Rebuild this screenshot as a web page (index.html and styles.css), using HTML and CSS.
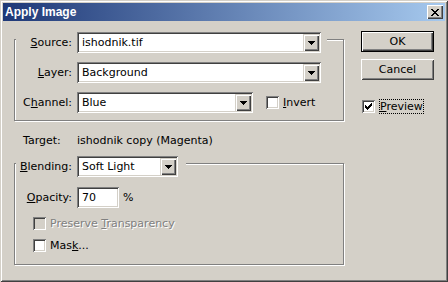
FILE: index.html
```html
<!DOCTYPE html>
<html lang="en">
<head>
  <meta charset="UTF-8" />
  <title>Apply Image</title>
  <link rel="stylesheet" href="styles.css">
</head>
<body>
  <div class="window">
    <!-- caption -->
    <div class="titlebar">
      <span class="title">Apply Image</span>
      <span class="close">
        <svg width="8" height="7" viewBox="0 0 8 7" shape-rendering="crispEdges">
          <path d="M0 0h2v1h-2z M6 0h2v1h-2z M1 1h2v1h-2z M5 1h2v1h-2z M2 2h4v1h-4z M3 3h2v1h-2z M2 4h4v1h-4z M1 5h2v1h-2z M5 5h2v1h-2z M0 6h2v1h-2z M6 6h2v1h-2z" fill="#000"/>
        </svg>
      </span>
    </div>

    <div class="content">
      <div class="main">
        <!-- source group -->
        <div class="group group-source">
          <div class="row head">
            <span class="lbl"><u>S</u>ource:</span>
            <div class="combo combo-wide">
              <span class="combo-text">ishodnik.tif</span>
              <span class="combo-btn"><svg width="7" height="4" shape-rendering="crispEdges"><path d="M0 0h7v1h-7z M1 1h5v1h-5z M2 2h3v1h-3z M3 3h1v1h-1z"/></svg></span>
            </div>
          </div>
          <div class="row">
            <span class="lbl"><u>L</u>ayer:</span>
            <div class="combo combo-wide">
              <span class="combo-text">Background</span>
              <span class="combo-btn"><svg width="7" height="4" shape-rendering="crispEdges"><path d="M0 0h7v1h-7z M1 1h5v1h-5z M2 2h3v1h-3z M3 3h1v1h-1z"/></svg></span>
            </div>
          </div>
          <div class="row">
            <span class="lbl">C<u>h</u>annel:</span>
            <div class="combo combo-channel">
              <span class="combo-text">Blue</span>
              <span class="combo-btn"><svg width="7" height="4" shape-rendering="crispEdges"><path d="M0 0h7v1h-7z M1 1h5v1h-5z M2 2h3v1h-3z M3 3h1v1h-1z"/></svg></span>
            </div>
            <span class="check invert">
              <span class="box"></span>
              <span><u>I</u>nvert</span>
            </span>
          </div>
        </div>

        <div class="target">
          <span class="target-lbl">Target:</span>
          <span>ishodnik copy (Magenta)</span>
        </div>

        <!-- blending group -->
        <div class="group group-blend">
          <div class="row head head-blend">
            <span class="lbl"><u>B</u>lending:</span>
            <div class="combo combo-blend">
              <span class="combo-text">Soft Light</span>
              <span class="combo-btn"><svg width="7" height="4" shape-rendering="crispEdges"><path d="M0 0h7v1h-7z M1 1h5v1h-5z M2 2h3v1h-3z M3 3h1v1h-1z"/></svg></span>
            </div>
          </div>
          <div class="row">
            <span class="lbl"><u>O</u>pacity:</span>
            <div class="field">70</div>
            <span class="pct">%</span>
          </div>
          <div class="check check-row disabled">
            <span class="box"></span>
            <span>Preserve <u>T</u>ransparency</span>
          </div>
          <div class="check check-row">
            <span class="box"></span>
            <span>Mas<u>k</u>...</span>
          </div>
        </div>
      </div>

      <div class="side">
        <div class="btn btn-default"><span class="btn-face">OK</span></div>
        <div class="btn"><span class="btn-face">Cancel</span></div>
        <div class="check preview">
          <span class="box">
            <svg width="7" height="7" shape-rendering="crispEdges"><path d="M0 2h1v3h-1z M1 3h1v3h-1z M2 4h1v3h-1z M3 3h1v3h-1z M4 2h1v3h-1z M5 1h1v3h-1z M6 0h1v3h-1z"/></svg>
          </span>
          <span class="focus"><u>P</u>review</span>
        </div>
      </div>
    </div>
  </div>
</body>
</html>
```

FILE: styles.css
```css
* {
  box-sizing: border-box;
}

html, body {
  margin: 0;
  background: #d4d0c8;
  font-family: "DejaVu Sans", Verdana, sans-serif;
  font-size: 11px;
  line-height: 13px;
  color: #000;
}

u {
  text-underline-offset: 1px;
}

.window {
  width: 448px;
  height: 282px;
  padding: 3px;
  background: #d4d0c8;
  box-shadow: inset 1px 1px #d4d0c8, inset -1px -1px #404040,
              inset 2px 2px #fff, inset -2px -2px #808080;
}

/* caption */
.titlebar {
  height: 18px;
  display: flex;
  align-items: center;
  justify-content: space-between;
  padding: 0 2px 0 2px;
  background: linear-gradient(to right, #1e3877, #a6c9ee);
}

.title {
  font-family: "Liberation Sans", Arial, sans-serif;
  font-weight: bold;
  font-size: 12px;
  color: #fff;
}

.close {
  width: 16px;
  height: 14px;
  display: flex;
  align-items: center;
  justify-content: center;
  background: #d4d0c8;
  box-shadow: inset 1px 1px #fff, inset -1px -1px #404040, inset -2px -2px #808080;
}

/* body */
.content {
  display: flex;
  padding-left: 11px;
}

.main {
  width: 330px;
}

.group {
  border: 1px solid #808080;
  box-shadow: inset 1px 1px #fff, 1px 1px #fff;
}

.group-source {
  margin-top: 18px;
  padding-bottom: 7px;
}

.group-blend {
  margin-top: 16px;
  padding-bottom: 12px;
}

.row {
  display: flex;
  align-items: center;
  height: 21px;
  margin: 9px 0 0 1px;
}

.row.head {
  margin-top: -8px;
  width: fit-content;
  padding-right: 6px;
  background: #d4d0c8;
}

.row.head-blend {
  padding-right: 8px;
}

.group-blend .row + .row {
  margin-top: 10px;
}

.lbl {
  width: 56px;
  margin-right: 5px;
  text-align: right;
}

/* combo boxes */
.combo {
  display: flex;
  height: 21px;
  padding: 2px;
  background: #fff;
  box-shadow: inset 1px 1px #808080, inset -1px -1px #fff,
              inset 2px 2px #404040, inset -2px -2px #d4d0c8;
}

.combo-wide { width: 244px; }
.combo-channel { width: 176px; }
.combo-blend { width: 101px; }

.combo-text {
  flex: 1;
  padding-left: 3px;
  line-height: 17px;
}

.combo-btn {
  width: 16px;
  height: 17px;
  display: flex;
  align-items: center;
  justify-content: center;
  background: #d4d0c8;
  box-shadow: inset 1px 1px #d4d0c8, inset 2px 2px #fff,
              inset -1px -1px #404040, inset -2px -2px #808080;
}

.field {
  width: 42px;
  height: 21px;
  padding: 0 0 0 5px;
  line-height: 21px;
  background: #fff;
  box-shadow: inset 1px 1px #808080, inset -1px -1px #fff,
              inset 2px 2px #404040, inset -2px -2px #d4d0c8;
}

.pct {
  margin-left: 4px;
}

/* checkboxes */
.check {
  display: flex;
  align-items: center;
  gap: 4px;
}

.box {
  width: 13px;
  height: 13px;
  padding: 3px;
  display: flex;
  background: #fff;
  box-shadow: inset 1px 1px #808080, inset -1px -1px #fff,
              inset 2px 2px #404040, inset -2px -2px #d4d0c8;
}

.invert {
  margin-left: 13px;
}

.check-row {
  height: 13px;
  margin: 9px 0 0 18px;
}

.disabled {
  color: #808080;
  text-shadow: 1px 1px #fff;
}

.disabled .box {
  background: #d4d0c8;
}

.target {
  display: flex;
  height: 13px;
  margin-top: 13px;
  padding-left: 9px;
}

.target-lbl {
  width: 54px;
}

/* buttons column */
.side {
  width: 73px;
  margin: 10px 0 0 17px;
}

.btn {
  height: 21px;
  margin-bottom: 7px;
  display: flex;
  background: #d4d0c8;
}

.btn-face {
  flex: 1;
  display: flex;
  align-items: center;
  justify-content: center;
  box-shadow: inset 1px 1px #fff, inset -1px -1px #404040,
              inset 2px 2px #d4d0c8, inset -2px -2px #808080;
}

.btn-default {
  border: 1px solid #000;
}

.btn-default .btn-face {
  box-shadow: inset 1px 1px #fff, inset -1px -1px #404040,
              inset -2px -2px #808080;
}

.preview {
  margin: 19px 0 0 1px;
}

.focus {
  padding: 1px 1px;
  outline: 1px dotted #000;
  outline-offset: -1px;
}
```
